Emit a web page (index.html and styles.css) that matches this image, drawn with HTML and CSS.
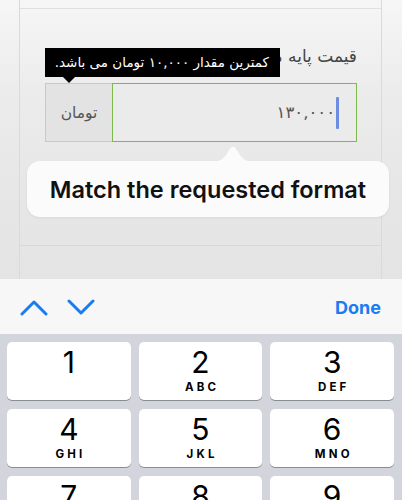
FILE: index.html
```html
<!DOCTYPE html>
<html lang="fa">
<head>
<meta charset="utf-8">
<link rel="stylesheet" href="styles.css">
</head>
<body>
<div class="page">
  <div class="card">
    <div class="card-top"></div>
    <div class="form-group">
      <div class="label" dir="rtl">قیمت پایه محصول</div>
      <div class="input-group" dir="rtl">
        <div class="input"><span class="value">۱۳۰,۰۰۰</span><span class="caret"></span></div>
        <div class="addon">تومان</div>
      </div>
      <div class="tip" dir="rtl">کمترین مقدار ۱۰,۰۰۰ تومان می باشد.</div>
      <div class="tip-arrow"></div>
    </div>
    <div class="card-bottom"></div>
  </div>
  <div class="bubble">
    <svg class="bubble-arrow" width="44" height="18" viewBox="0 0 44 18"><path d="M0 18 C10 18 14 14 18 6 Q22 -1 26 6 C30 14 34 18 44 18 Z" fill="#fbfbfb"/></svg>
    <span>Match the requested format</span>
  </div>
</div>
<div class="accessory">
  <div class="arrows">
    <svg width="28" height="17" viewBox="0 0 28 17"><path d="M2 15 L14 3 L26 15" fill="none" stroke="#1b7cf0" stroke-width="3" stroke-linecap="round" stroke-linejoin="round"/></svg>
    <svg width="28" height="17" viewBox="0 0 28 17"><path d="M2 2 L14 14 L26 2" fill="none" stroke="#1b7cf0" stroke-width="3" stroke-linecap="round" stroke-linejoin="round"/></svg>
  </div>
  <div class="done">Done</div>
</div>
<div class="keyboard">
  <div class="key"><span class="d">1</span><span class="l"></span></div>
  <div class="key"><span class="d">2</span><span class="l">ABC</span></div>
  <div class="key"><span class="d">3</span><span class="l">DEF</span></div>
  <div class="key"><span class="d">4</span><span class="l">GHI</span></div>
  <div class="key"><span class="d">5</span><span class="l">JKL</span></div>
  <div class="key"><span class="d">6</span><span class="l">MNO</span></div>
  <div class="key"><span class="d">7</span><span class="l">PQRS</span></div>
  <div class="key"><span class="d">8</span><span class="l">TUV</span></div>
  <div class="key"><span class="d">9</span><span class="l">WXYZ</span></div>
</div>
</body>
</html>
```
FILE: styles.css
```css
* { box-sizing: border-box; }
html, body { margin: 0; padding: 0; }
body {
  width: 402px;
  height: 500px;
  overflow: hidden;
  font-family: "Inter", "Liberation Sans", sans-serif;
  background: #d2d5db;
}
.page {
  position: relative;
  height: 279px;
  padding: 0 20px 0 19px;
  background: linear-gradient(#f6f6f6 0px, #ececec 90px, #e7e7e7 180px, #e4e4e4 279px);
}
.card {
  height: 100%;
  border-left: 1px solid #dadada;
  border-right: 1px solid #dadada;
  display: flex;
  flex-direction: column;
}
.card-top {
  height: 9px;
  border-bottom: 1px solid #e0e0e0;
}
.form-group {
  position: relative;
  padding: 34px 24px 0 25px;
  height: 237px;
  border-bottom: 1px solid #d8d8d8;
}
.label {
  font-family: "DejaVu Sans", sans-serif;
  font-size: 17px;
  line-height: 26px;
  color: #444;
  white-space: nowrap;
  overflow: hidden;
  height: 26px;
}
.input-group {
  display: flex;
  height: 59px;
  margin-top: 14px;
}
.input {
  flex: 1;
  border: 1px solid #7cba4c;
  background: #ebebeb;
  display: flex;
  align-items: center;
  padding-right: 19px;
  font-family: "DejaVu Sans", sans-serif;
  font-size: 16.5px;
  color: #555;
}
.caret {
  width: 3px;
  height: 32px;
  background: #6d8ee0;
  border-radius: 1px;
  margin-right: -2px;
  order: -1;
}
.value { margin-right: 1px; }
.addon {
  width: 67px;
  border: 1px solid #c9c9c9;
  border-right: none;
  background: #e3e3e3;
  display: flex;
  align-items: center;
  justify-content: center;
  font-family: "DejaVu Sans", sans-serif;
  font-size: 15.5px;
  color: #555;
}
.tip {
  position: absolute;
  left: 25px;
  top: 39px;
  width: 235px;
  height: 29px;
  background: #000;
  color: #fff;
  font-family: "DejaVu Sans", sans-serif;
  font-size: 13.5px;
  line-height: 29px;
  padding: 0 11px 0 8px;
  white-space: nowrap;
  text-align: right;
}
.tip-arrow {
  position: absolute;
  left: 43px;
  top: 68px;
  width: 0;
  height: 0;
  border-left: 6px solid transparent;
  border-right: 6px solid transparent;
  border-top: 6px solid #000;
}
.card-bottom { flex: 1; }
.bubble {
  position: absolute;
  left: 27px;
  top: 161px;
  width: 362px;
  height: 56px;
  background: #fbfbfb;
  border-radius: 13px;
  box-shadow: 0 1px 3px rgba(0,0,0,0.06);
  display: flex;
  align-items: center;
  justify-content: center;
  font-family: "Inter", "Liberation Sans", sans-serif;
  font-weight: 600;
  font-size: 23.5px;
  color: #111;
}
.bubble-arrow {
  position: absolute;
  left: 184px;
  top: -17px;
}
.accessory {
  height: 55px;
  background: #f7f7f8;
  display: flex;
  align-items: center;
  justify-content: space-between;
  padding: 0 21px 0 20px;
}
.arrows {
  display: flex;
  gap: 19px;
  padding-top: 2px;
}
.done {
  font-family: "Inter", "Liberation Sans", sans-serif;
  font-weight: 700;
  font-size: 18px;
  color: #1b7cf0;
  padding-top: 2px;
}
.keyboard {
  display: grid;
  grid-template-columns: repeat(3, 1fr);
  column-gap: 8px;
  row-gap: 9px;
  padding: 8px 8px 0 7px;
}
.key {
  height: 58px;
  background: #fff;
  border-radius: 5px;
  box-shadow: 0 1px 0 #8a8d92;
  display: flex;
  flex-direction: column;
  align-items: center;
  padding-top: 3px;
  color: #000;
}
.key .d {
  font-size: 30px;
  line-height: 34px;
  font-weight: 400;
}
.key .l {
  font-size: 11.5px;
  line-height: 12px;
  font-weight: 700;
  letter-spacing: 3.2px;
  margin-left: 3.2px;
  margin-top: 2px;
}
```
